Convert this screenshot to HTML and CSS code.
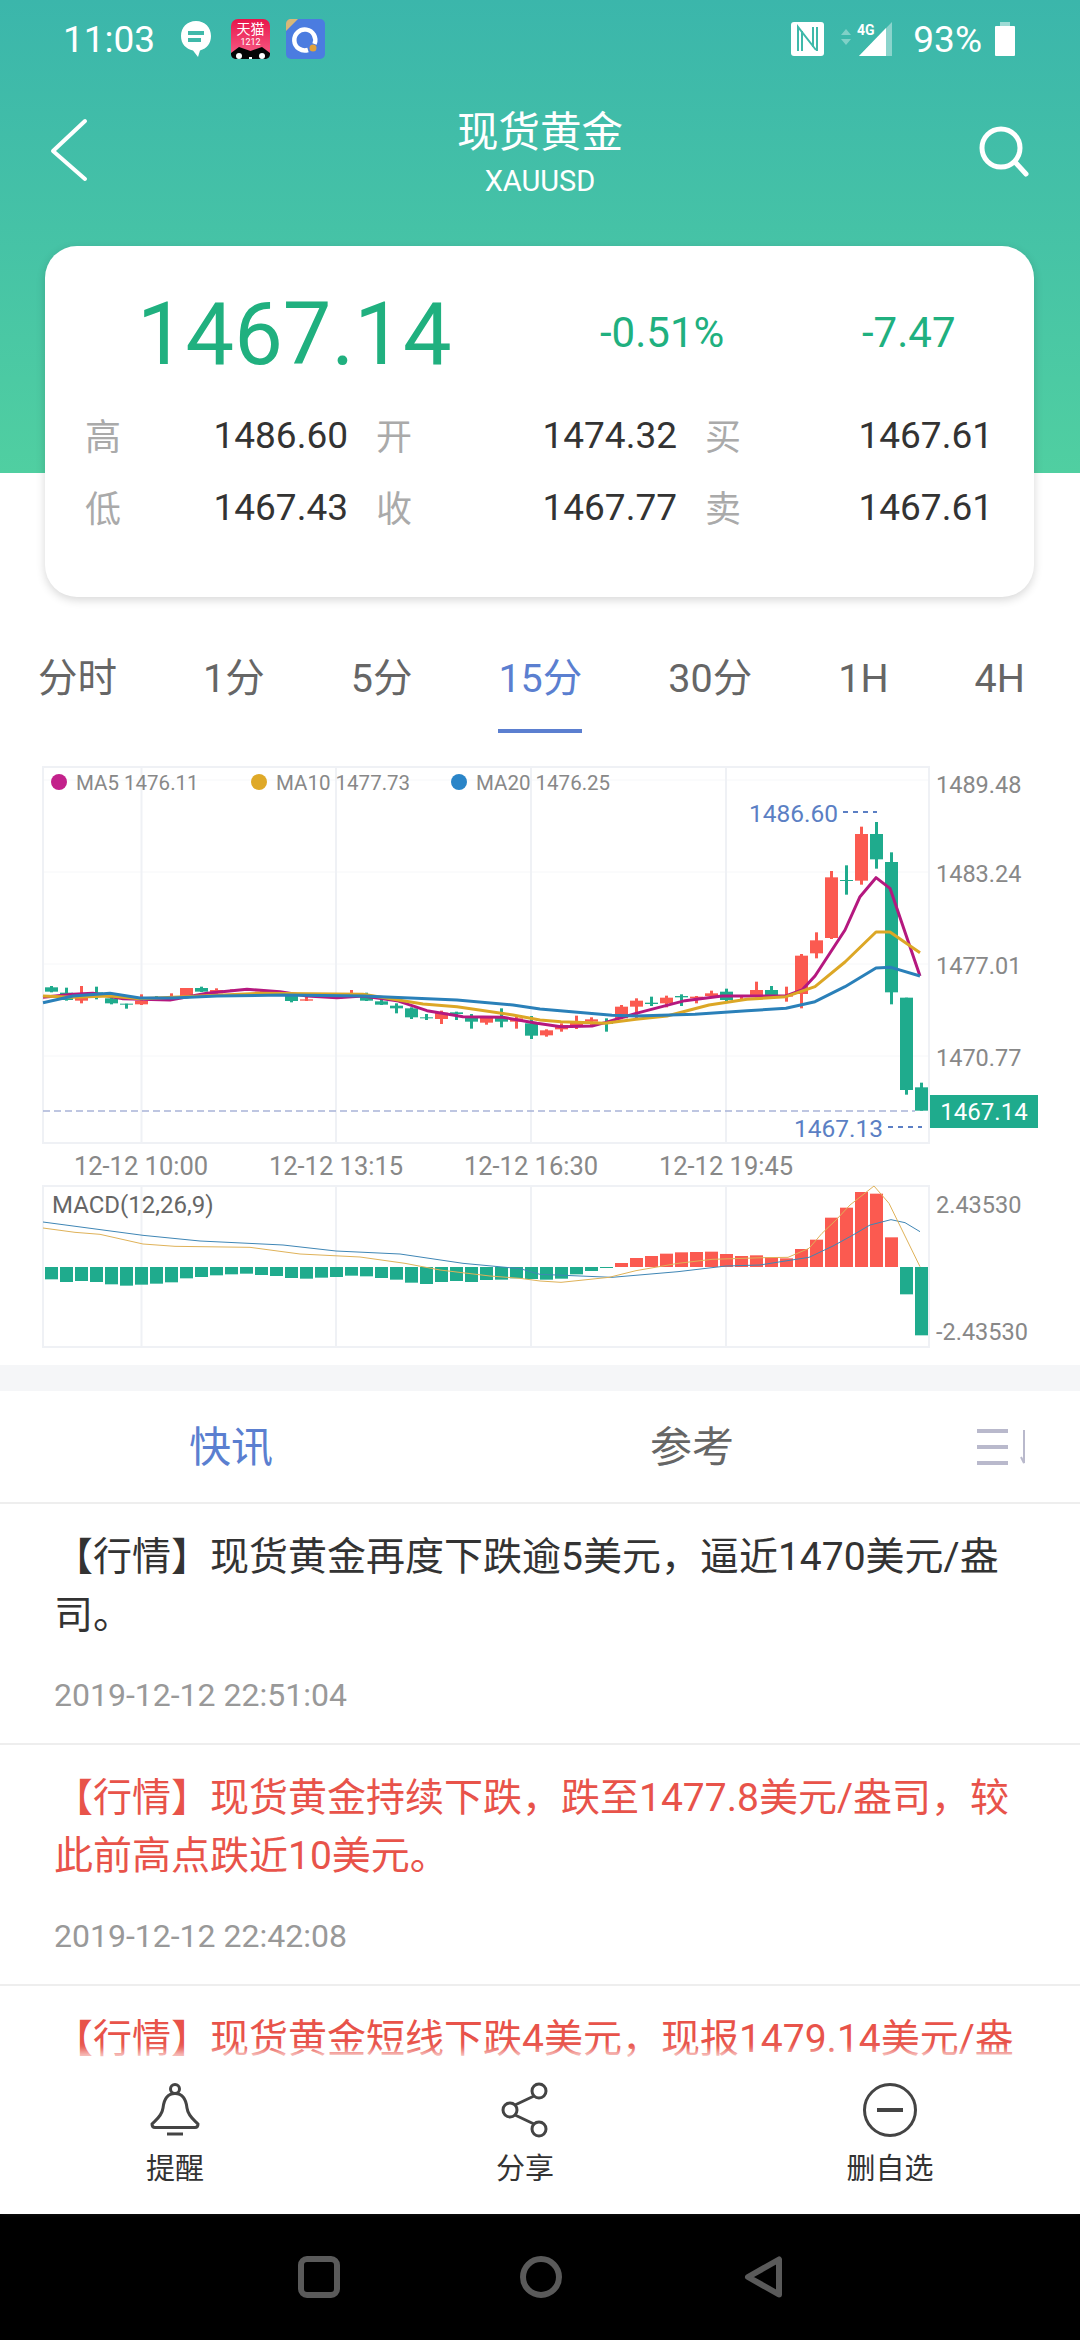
FILE: index.html
```html
<!DOCTYPE html>
<html lang="zh-CN">
  <head>
    <meta charset="UTF-8" />
    <meta name="viewport" content="width=device-width, initial-scale=1.0" />
    <title>现货黄金</title>
    <link rel="stylesheet" href="styles.css">
  </head>

  <body>
    <div class="page">
      <div class="hero">
        <div class="status-bar">
          <div class="status-left">
            <span class="status-time">11:03</span>
            <svg class="ic-chat" width="32" height="38" viewBox="0 0 32 38">
              <path d="M16 1C7 1 1 7.500 1 16C1 24 6 29 13 30.500L18 37L20 30.500C27 28.500 31 23 31 16C31 7.500 25 1 16 1Z" fill="#fff"/>
              <rect x="8" y="11" width="16" height="4" fill="#3fb9aa"/>
              <rect x="8" y="18" width="13" height="4" fill="#3fb9aa"/>
            </svg>
            <svg class="ic-tmall" width="39" height="40" viewBox="0 0 39 40">
              <defs>
                <linearGradient id="tmall-bg" x1="0" y1="0" x2="0" y2="1">
                  <stop offset="0" stop-color="#e8164b"/>
                  <stop offset="1" stop-color="#f8628a"/>
                </linearGradient>
              </defs>
              <rect width="39" height="40" rx="7" fill="url(#tmall-bg)"/>
              <path d="M0 34L8 28L19.500 32L31 28L39 34V35C39 38 37 40 33 40H6C2 40 0 38 0 35Z" fill="#050505"/>
              <ellipse cx="8" cy="37" rx="3" ry="3" fill="#fff"/>
              <ellipse cx="31" cy="37" rx="3" ry="3" fill="#fff"/>
              <rect x="18" y="38" width="3" height="2" fill="#fff"/>
              <text class="tmall-name" x="19.500" y="15">天猫</text>
              <text class="tmall-date" x="19.500" y="26">1212</text>
            </svg>
            <svg class="ic-app" width="39" height="40" viewBox="0 0 39 40">
              <rect width="39" height="40" rx="5" fill="#4b7ce0"/>
              <path d="M0 12V5C0 2 2 0 5 0H12Z" fill="#d8b878"/>
              <path d="M28.500 25A10.500 10.500 0 1 0 22 31" fill="none" stroke="#fff" stroke-width="4.500"/>
              <circle cx="27" cy="29" r="3.500" fill="#e2a23a"/>
            </svg>
          </div>
          <div class="status-right">
            <svg class="ic-nfc" width="33" height="34" viewBox="0 0 33 34">
              <rect width="33" height="34" rx="3" fill="#fff"/>
              <path d="M7 29V5L25 28M26 5V29M11 9V29M22 5V25" fill="none" stroke="#3fb9aa" stroke-width="2"/>
            </svg>
            <svg class="ic-net" width="52" height="36" viewBox="0 0 52 36">
              <path d="M6 8L11 14H1Z M6 24L1 18H11Z" fill="#fff" fill-opacity="0.35"/>
              <path d="M19 35L52 1V35Z" fill="#fff" fill-opacity="0.4"/>
              <path d="M19 35L46 7V35Z" fill="#fff"/>
              <text class="net-label" x="17" y="14">4G</text>
            </svg>
            <span class="status-pct">93%</span>
            <svg class="ic-battery" width="20" height="34" viewBox="0 0 20 34">
              <rect x="5" y="0" width="10" height="5" fill="#fff" fill-opacity="0.5"/>
              <rect x="0" y="4" width="20" height="30" rx="1" fill="#fff"/>
            </svg>
          </div>
        </div>

        <div class="title-bar">
          <svg class="back-btn" width="60" height="70" viewBox="0 0 60 70">
            <path d="M45 6L13 36L45 64" fill="none" stroke="#fff" stroke-width="4" stroke-linecap="round" stroke-linejoin="round"/>
          </svg>
          <div class="title-text">
            <div class="title-name">现货黄金</div>
            <div class="title-code">XAUUSD</div>
          </div>
          <svg class="search-btn" width="70" height="70" viewBox="0 0 70 70">
            <circle cx="31" cy="33" r="19" fill="none" stroke="#fff" stroke-width="5"/>
            <path d="M45 47L56 59" fill="none" stroke="#fff" stroke-width="5" stroke-linecap="round"/>
          </svg>
        </div>

        <div class="quote-card">
          <div class="quote-top">
            <span class="quote-price">1467.14</span>
            <span class="quote-pct">-0.51%</span>
            <span class="quote-chg">-7.47</span>
          </div>
          <div class="quote-grid">
            <div class="stat"><span class="stat-label">高</span><span class="stat-value">1486.60</span></div>
            <div class="stat"><span class="stat-label">开</span><span class="stat-value">1474.32</span></div>
            <div class="stat"><span class="stat-label">买</span><span class="stat-value">1467.61</span></div>
            <div class="stat"><span class="stat-label">低</span><span class="stat-value">1467.43</span></div>
            <div class="stat"><span class="stat-label">收</span><span class="stat-value">1467.77</span></div>
            <div class="stat"><span class="stat-label">卖</span><span class="stat-value">1467.61</span></div>
          </div>
        </div>
      </div>

      <div class="period-tabs">
        <span class="period">分时</span>
        <span class="period">1分</span>
        <span class="period">5分</span>
        <span class="period active">15分</span>
        <span class="period">30分</span>
        <span class="period">1H</span>
        <span class="period">4H</span>
      </div>

      <svg class="chart" width="1080" height="605" viewBox="0 760 1080 605">
        <g class="grid-thin">
          <path d="M43 780H929M43 872H929M43 964H929M43 1056H929"/>
        </g>
        <g class="grid">
          <rect x="43" y="767" width="886" height="376"/>
          <rect x="43" y="1186" width="886" height="161"/>
          <path d="M141.500 767V1143M336 767V1143M531 767V1143M726 767V1143"/>
          <path d="M141.500 1186V1347M336 1186V1347M531 1186V1347M726 1186V1347"/>
        </g>

        <line class="low-line" x1="43" y1="1111" x2="915" y2="1111"/>
        <g id="candles"></g>
        <polyline id="ma5" class="ma ma5"/>
        <polyline id="ma10" class="ma ma10"/>
        <polyline id="ma20" class="ma ma20"/>

        <circle cx="59" cy="782" r="8" fill="#c3218b"/>
        <text class="legend" x="76" y="790">MA5 1476.11</text>
        <circle cx="259" cy="782" r="8" fill="#dfa928"/>
        <text class="legend" x="276" y="790">MA10 1477.73</text>
        <circle cx="459" cy="782" r="8" fill="#2a85c8"/>
        <text class="legend" x="476" y="790">MA20 1476.25</text>

        <text class="axis" x="936" y="793">1489.48</text>
        <text class="axis" x="936" y="882">1483.24</text>
        <text class="axis" x="936" y="974">1477.01</text>
        <text class="axis" x="936" y="1066">1470.77</text>

        <text class="extreme" x="749" y="822">1486.60</text>
        <line class="extreme-dots" x1="843" y1="812" x2="877" y2="812"/>
        <text class="extreme" x="794" y="1137">1467.13</text>
        <line class="extreme-dots" x1="888" y1="1127" x2="922" y2="1127"/>

        <rect x="930" y="1095" width="108" height="33" fill="#1fab8d"/>
        <text class="last-price" x="984" y="1120">1467.14</text>

        <text class="time" x="141" y="1175">12-12 10:00</text>
        <text class="time" x="336" y="1175">12-12 13:15</text>
        <text class="time" x="531" y="1175">12-12 16:30</text>
        <text class="time" x="726" y="1175">12-12 19:45</text>

        <g id="macd-bars"></g>
        <polyline id="dif" class="signal dif"/>
        <polyline id="dea" class="signal dea"/>
        <text class="macd-label" x="52" y="1213">MACD(12,26,9)</text>
        <text class="axis" x="936" y="1213">2.43530</text>
        <text class="axis" x="936" y="1340">-2.43530</text>
      </svg>

      <div class="strip"></div>

      <div class="news-tabs">
        <span class="news-tab active">快讯</span>
        <span class="news-tab">参考</span>
        <svg class="news-more" width="50" height="38" viewBox="0 0 50 38">
          <path d="M0 3H31M0 19H31M0 35H31" fill="none" stroke="#b9b9cc" stroke-width="4"/>
          <path d="M47 2V35L44 29" fill="none" stroke="#b9b9cc" stroke-width="2"/>
        </svg>
      </div>

      <div class="news-list">
        <div class="news-item">
          <p class="news-text">【行情】现货黄金再度下跌逾5美元，逼近1470美元/盎司。</p>
          <div class="news-date">2019-12-12 22:51:04</div>
        </div>
        <div class="news-item hot">
          <p class="news-text">【行情】现货黄金持续下跌，跌至1477.8美元/盎司，较此前高点跌近10美元。</p>
          <div class="news-date">2019-12-12 22:42:08</div>
        </div>
        <div class="news-item hot">
          <p class="news-text">【行情】现货黄金短线下跌4美元，现报1479.14美元/盎</p>
        </div>
      </div>

      <div class="toolbar">
        <div class="tool">
          <svg width="50" height="56" viewBox="0 0 50 56">
            <circle cx="25" cy="7" r="4.500"/>
            <path d="M25 11.500C17 11.500 14 17 13 26C12 34 6 38 2 42Q2 45.500 5 45.500H45Q48 45.500 48 42C44 38 38 34 37 26C36 17 33 11.500 25 11.500Z"/>
            <path d="M17 52H33"/>
          </svg>
          <span class="tool-label">提醒</span>
        </div>
        <div class="tool">
          <svg width="50" height="56" viewBox="0 0 50 56">
            <circle cx="39" cy="9" r="7"/>
            <circle cx="10" cy="28" r="7"/>
            <circle cx="39" cy="47" r="7"/>
            <path d="M15 23L34 14M15 33L34 42"/>
          </svg>
          <span class="tool-label">分享</span>
        </div>
        <div class="tool">
          <svg width="56" height="56" viewBox="0 0 56 56">
            <circle cx="28" cy="28" r="25.500"/>
            <path class="tool-minus" d="M15 28H41"/>
          </svg>
          <span class="tool-label">删自选</span>
        </div>
      </div>

      <div class="nav-bar">
        <svg width="42" height="42" viewBox="0 0 42 42">
          <rect x="3" y="3" width="36" height="36" rx="6"/>
        </svg>
        <svg width="42" height="42" viewBox="0 0 42 42">
          <circle cx="21" cy="21" r="18"/>
        </svg>
        <svg width="40" height="42" viewBox="0 0 40 42">
          <path d="M35 3.500V38.500L4 21Z"/>
        </svg>
      </div>
    </div>

    <script src="chart.js"></script>
  </body>
</html>
```

FILE: styles.css
```css
* {
  box-sizing: border-box;
}

body {
  margin: 0;
  background-color: white;
  font-family: Roboto, "Noto Sans CJK SC", sans-serif;
}

p {
  margin: 0;
}

.page {
  display: flex;
  flex-direction: column;
  width: 1080px;
  height: 2340px;
  overflow: hidden;
}

.hero {
  height: 473px;
  flex-shrink: 0;
  background: linear-gradient(#3bb6ab, #50cfa1);
  color: white;
}

.status-bar {
  display: flex;
  justify-content: space-between;
  align-items: center;
  height: 80px;
  padding: 0 65px 2px 63px;
}

.status-left,
.status-right {
  display: flex;
  align-items: center;
}

.status-time {
  width: 92px;
  font-size: 37px;
  white-space: nowrap;
}

.ic-chat {
  margin-left: 25px;
}

.ic-tmall {
  margin-left: 19px;
}

.ic-app {
  margin-left: 16px;
}

.tmall-name {
  fill: white;
  font-size: 14px;
  text-anchor: middle;
}

.tmall-date {
  fill: white;
  font-size: 9px;
  text-anchor: middle;
}

.ic-net {
  margin-left: 16px;
}

.net-label {
  fill: white;
  font-size: 14px;
  font-weight: 700;
}

.status-pct {
  margin-left: 21px;
  font-size: 37px;
}

.ic-battery {
  margin-left: 13px;
}

.title-bar {
  display: grid;
  grid-template-columns: 120px 1fr 120px;
  align-items: center;
  height: 142px;
  margin-top: -1px;
}

.back-btn {
  margin-left: 40px;
}

.search-btn {
  justify-self: end;
  margin-right: 40px;
}

.title-text {
  padding-top: 7px;
  text-align: center;
}

.title-name {
  font-size: 41.500px;
  line-height: 50px;
}

.title-code {
  margin-top: 5px;
  font-size: 29px;
  line-height: 36px;
}

.quote-card {
  width: 989px;
  height: 351px;
  margin: 25px 0 0 45px;
  padding-top: 38px;
  background-color: white;
  border-radius: 32px;
  box-shadow: 0 3px 10px rgba(0, 0, 0, 0.16);
}

.quote-top {
  display: flex;
  align-items: center;
  height: 100px;
  padding-left: 92px;
  color: #20b07f;
}

.quote-price {
  width: 463px;
  font-size: 86.500px;
}

.quote-pct {
  width: 262px;
  margin-top: -4px;
  font-size: 42px;
}

.quote-chg {
  margin-top: -4px;
  font-size: 42px;
}

.quote-grid {
  display: grid;
  grid-template-columns: 263px 301px 288px;
  grid-auto-rows: 72px;
  column-gap: 28px;
  margin-top: 15px;
  padding-left: 40px;
}

.stat {
  display: flex;
  justify-content: space-between;
  align-items: center;
}

.stat-label {
  margin-top: -3px;
  color: #aaa;
  font-size: 36px;
}

.stat-value {
  color: #333;
  font-size: 37px;
}

.period-tabs {
  display: flex;
  justify-content: space-between;
  flex-shrink: 0;
  margin-top: 167px;
  padding: 0 55px 0 38px;
}

.period {
  height: 93px;
  padding-bottom: 12px;
  color: #666;
  font-size: 39.500px;
  line-height: 78px;
  white-space: nowrap;
}

.period.active {
  color: #5b7fd0;
  border-bottom: 4px solid #5b7fd0;
}

.chart {
  display: block;
  flex-shrink: 0;
  margin-top: 27px;
}

.chart text {
  font-family: Roboto, sans-serif;
}

.grid rect,
.grid path {
  fill: none;
  stroke: #eff1f5;
  stroke-width: 2;
}

.grid-thin path {
  fill: none;
  stroke: #f6f7f9;
  stroke-width: 1;
}

.low-line {
  stroke: #a9b4d8;
  stroke-width: 1.500;
  stroke-dasharray: 7 4;
}

.ma {
  fill: none;
  stroke-width: 3;
  stroke-linejoin: round;
}

.ma5 {
  stroke: #b5187f;
}

.ma10 {
  stroke: #dca726;
}

.ma20 {
  stroke: #2a80b9;
}

.signal {
  fill: none;
  stroke-width: 1;
}

.dif {
  stroke: #3f86b5;
}

.dea {
  stroke: #dfb259;
}

.legend {
  fill: #888;
  font-size: 20.500px;
}

.axis {
  fill: #888;
  font-size: 23.500px;
}

.time {
  fill: #888;
  font-size: 25.500px;
  text-anchor: middle;
}

.extreme {
  fill: #5b7fc4;
  font-size: 24.500px;
}

.extreme-dots {
  stroke: #5b7fc4;
  stroke-width: 2;
  stroke-dasharray: 5 5;
}

.last-price {
  fill: white;
  font-size: 24px;
  text-anchor: middle;
}

.macd-label {
  fill: #666;
  font-size: 24px;
}

.strip {
  height: 26px;
  flex-shrink: 0;
  background-color: #f5f6f8;
}

.news-tabs {
  display: grid;
  grid-template-columns: 461px 327px 50px;
  flex-shrink: 0;
  align-items: center;
  height: 113px;
  padding-left: 189px;
  border-bottom: 2px solid #eee;
  color: #666;
  font-size: 42px;
}

.news-tab {
  margin-bottom: 6px;
}

.news-tab.active {
  color: #5b7fd0;
}

.news-list {
  flex: 1;
  overflow: hidden;
}

.news-item {
  height: 241px;
  padding: 24px 50px 0 54px;
  border-bottom: 2px solid #eee;
}

.news-text {
  height: 116px;
  color: #333;
  font-size: 39px;
  line-height: 58px;
}

.news-item.hot .news-text {
  color: #e8534a;
}

.news-date {
  margin-top: 31px;
  color: #999;
  font-size: 32px;
  line-height: 40px;
}

.toolbar {
  position: relative;
  display: grid;
  grid-template-columns: 350px 350px 1fr;
  flex-shrink: 0;
  height: 157px;
  padding-top: 25px;
  background-color: white;
  box-shadow: 0 -6px 8px rgba(255, 255, 255, 0.7);
}

.tool {
  display: flex;
  flex-direction: column;
  align-items: center;
}

.tool svg {
  fill: none;
  stroke: #444;
  stroke-width: 3;
}

.tool-minus {
  stroke-width: 4;
}

.tool-label {
  margin-top: 11px;
  color: #333;
  font-size: 29px;
  line-height: 40px;
}

.nav-bar {
  display: grid;
  grid-template-columns: 298px 42px 180px 42px 182px 40px;
  flex-shrink: 0;
  align-items: start;
  height: 126px;
  padding-top: 42px;
  background-color: black;
}

.nav-bar svg {
  fill: none;
  stroke: #5a5a5a;
  stroke-width: 6;
  stroke-linejoin: round;
}

.nav-bar svg:nth-child(1) {
  grid-column: 2;
}

.nav-bar svg:nth-child(2) {
  grid-column: 4;
}

.nav-bar svg:nth-child(3) {
  grid-column: 6;
}
```

FILE: chart.js
```js
// measurements were read off a 3x crop, so y values here are y * 3 from the section top
const CHART_TOP = 760;
const MACD_TOP = 1170;
const SVG_NS = "http://www.w3.org/2000/svg";

const GREEN = "#1fab8d";
const RED = "#fb5a50";

// [body top, body bottom, wick top, wick bottom, colour]
const candles = [
  [682, 695, 678, 697, "g"], [698, 720, 683, 722, "g"], [700, 722, 678, 730, "r"],
  [697, 708, 680, 718, "g"], [715, 730, 710, 733, "g"], [731, 734, 731, 746, "g"],
  [722, 733, 703, 735, "r"], [712, 716, 708, 718, "g"], [714, 718, 700, 720, "r"],
  [684, 708, 684, 710, "r"], [684, 695, 680, 696, "g"], [690, 700, 685, 702, "r"],
  [690, 693, 688, 695, "r"], [688, 691, 686, 693, "r"], [695, 698, 693, 700, "r"],
  [695, 702, 693, 704, "r"], [703, 723, 700, 727, "g"], [718, 722, 710, 723, "r"],
  [704, 707, 702, 709, "r"], [705, 715, 703, 717, "r"], [700, 705, 690, 708, "r"],
  [708, 722, 698, 723, "g"], [724, 734, 720, 735, "g"], [737, 745, 730, 760, "g"],
  [745, 772, 742, 777, "g"], [772, 775, 762, 780, "g"], [758, 777, 752, 792, "r"],
  [757, 762, 755, 780, "g"], [770, 785, 762, 806, "g"], [772, 788, 770, 794, "r"],
  [773, 785, 745, 802, "g"], [775, 785, 770, 806, "r"], [790, 827, 768, 837, "g"],
  [811, 826, 808, 830, "r"], [795, 808, 790, 815, "r"], [785, 797, 767, 807, "r"],
  [778, 785, 772, 795, "r"], [789, 791, 775, 815, "g"], [740, 775, 735, 778, "r"],
  [722, 740, 715, 775, "r"], [728, 732, 710, 738, "g"], [713, 730, 707, 742, "r"],
  [708, 712, 703, 738, "g"], [710, 715, 708, 730, "r"], [700, 708, 692, 712, "r"],
  [695, 720, 686, 725, "g"], [708, 711, 705, 718, "r"], [690, 708, 665, 712, "r"],
  [690, 705, 678, 708, "g"], [705, 710, 680, 725, "r"], [587, 702, 582, 745, "r"],
  [541, 580, 517, 595, "r"], [352, 534, 333, 537, "r"], [360, 362, 316, 404, "g"],
  [222, 362, 200, 374, "r"], [222, 298, 186, 326, "g"], [306, 697, 277, 733, "g"],
  [713, 990, 713, 1004, "g"], [982, 1052, 968, 1052, "g"],
];

// bottom (green, below zero) or top (red, above zero) of each MACD bar
const macdZero = 291;
const macdBars = [
  328, 336, 333, 336, 343, 347, 344, 341, 337, 325, 321, 316, 313, 311, 315, 318,
  324, 326, 323, 321, 317, 319, 324, 329, 338, 342, 336, 333, 336, 330, 329, 325,
  327, 329, 326, 313, 303, 294, 279, 264, 258, 251, 247, 246, 245, 252, 258, 256,
  262, 265, 237, 209, 143, 113, 66, 71, 202, 373, 496,
];

const ma5 = [
  [43, 712], [73, 703], [93, 700], [123, 716], [170, 720], [207, 700], [247, 688], [280, 695],
  [307, 708], [337, 713], [363, 708], [397, 722], [427, 752], [463, 770], [503, 772], [537, 790],
  [561, 800], [592, 798], [605, 788], [636, 760], [685, 722], [722, 708], [786, 708], [802, 690],
  [815, 648], [845, 510], [860, 410], [876, 353], [890, 385], [920, 648],
];
const ma10 = [
  [43, 708], [73, 712], [110, 708], [140, 716], [173, 712], [257, 700], [363, 703], [423, 732],
  [457, 740], [513, 765], [540, 780], [561, 785], [605, 790], [636, 778], [667, 768], [709, 735],
  [747, 718], [786, 710], [815, 680], [845, 606], [876, 516], [890, 516], [920, 578],
];
const ma20 = [
  [43, 728], [73, 708], [110, 700], [140, 714], [173, 714], [217, 708], [283, 705], [363, 708],
  [457, 720], [513, 735], [540, 747], [612, 766], [636, 768], [695, 763], [747, 752], [786, 745],
  [815, 725], [845, 680], [876, 624], [891, 622], [920, 648],
];
const dif = [
  [43, 156], [143, 196], [200, 213], [283, 225], [336, 243], [400, 252], [463, 280], [520, 296],
  [540, 313], [612, 322], [678, 305], [726, 288], [760, 285], [781, 275], [809, 262], [833, 228],
  [853, 195], [870, 165], [891, 149], [905, 158], [920, 185],
];
const dea = [
  [43, 174], [75, 187], [100, 193], [143, 222], [175, 229], [250, 232], [300, 252], [360, 261],
  [405, 280], [440, 300], [490, 318], [520, 325], [540, 333], [561, 337], [609, 322], [636, 302],
  [678, 280], [712, 268], [764, 263], [788, 262], [809, 235], [822, 190], [836, 150], [850, 105],
  [874, 48], [889, 100], [920, 290],
];

function barLeft(i) {
  return 45 + 15 * i;
}

function addRect(parent, x, y, width, height, fill) {
  const rect = document.createElementNS(SVG_NS, "rect");
  rect.setAttribute("x", x);
  rect.setAttribute("y", y);
  rect.setAttribute("width", width);
  rect.setAttribute("height", Math.max(height, 1));
  rect.setAttribute("fill", fill);
  parent.append(rect);
}

function setLine(id, points, top) {
  const line = document.getElementById(id);
  const coords = points.map(function (p) {
    return p[0] + "," + (top + p[1] / 3);
  });
  line.setAttribute("points", coords.join(" "));
}

const candleGroup = document.getElementById("candles");
candles.forEach(function (c, i) {
  const color = c[4] === "g" ? GREEN : RED;
  addRect(candleGroup, barLeft(i) + 5, CHART_TOP + c[2] / 3, 3, (c[3] - c[2]) / 3, color);
  addRect(candleGroup, barLeft(i), CHART_TOP + c[0] / 3, 13, (c[1] - c[0]) / 3, color);
});

const macdGroup = document.getElementById("macd-bars");
macdBars.forEach(function (v, i) {
  const top = Math.min(v, macdZero);
  const color = v > macdZero ? GREEN : RED;
  addRect(macdGroup, barLeft(i), MACD_TOP + top / 3, 13, Math.abs(v - macdZero) / 3, color);
});

setLine("ma5", ma5, CHART_TOP);
setLine("ma10", ma10, CHART_TOP);
setLine("ma20", ma20, CHART_TOP);
setLine("dif", dif, MACD_TOP);
setLine("dea", dea, MACD_TOP);
```
